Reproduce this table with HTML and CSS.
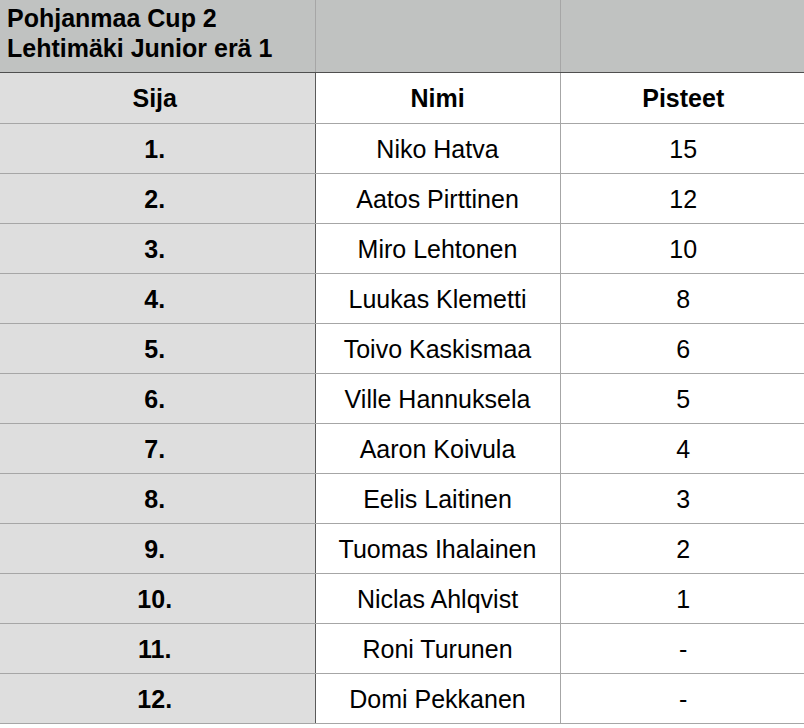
FILE: index.html
```html
<!DOCTYPE html>
<html lang="fi">
<head>
<meta charset="utf-8">
<title>Pohjanmaa Cup 2</title>
<link rel="stylesheet" href="styles.css">
</head>
<body>
<table class="sheet">
  <colgroup><col class="c1"><col class="c2"><col class="c3"></colgroup>
  <tr class="title-row">
    <td class="title">Pohjanmaa Cup 2<br>Lehtimäki Junior erä 1</td>
    <td></td>
    <td></td>
  </tr>
  <tr class="head-row">
    <th class="rank">Sija</th>
    <th>Nimi</th>
    <th>Pisteet</th>
  </tr>
  <tr><td class="rank">1.</td><td>Niko Hatva</td><td>15</td></tr>
  <tr><td class="rank">2.</td><td>Aatos Pirttinen</td><td>12</td></tr>
  <tr><td class="rank">3.</td><td>Miro Lehtonen</td><td>10</td></tr>
  <tr><td class="rank">4.</td><td>Luukas Klemetti</td><td>8</td></tr>
  <tr><td class="rank">5.</td><td>Toivo Kaskismaa</td><td>6</td></tr>
  <tr><td class="rank">6.</td><td>Ville Hannuksela</td><td>5</td></tr>
  <tr><td class="rank">7.</td><td>Aaron Koivula</td><td>4</td></tr>
  <tr><td class="rank">8.</td><td>Eelis Laitinen</td><td>3</td></tr>
  <tr><td class="rank">9.</td><td>Tuomas Ihalainen</td><td>2</td></tr>
  <tr><td class="rank">10.</td><td>Niclas Ahlqvist</td><td>1</td></tr>
  <tr><td class="rank">11.</td><td>Roni Turunen</td><td>-</td></tr>
  <tr><td class="rank">12.</td><td>Domi Pekkanen</td><td>-</td></tr>
</table>
</body>
</html>
```

FILE: styles.css
```css
html, body {
  margin: 0;
  padding: 0;
  background: #ffffff;
}

body {
  font-family: "Liberation Sans", Arial, sans-serif;
  color: #000;
  overflow: hidden;
}

.sheet {
  border-collapse: collapse;
  table-layout: fixed;
  width: 806px;
}

.c1 { width: 315px; }
.c2 { width: 245px; }
.c3 { width: 246px; }

.sheet td,
.sheet th {
  border-left: 1px solid #a6a6a6;
  border-bottom: 1px solid #a6a6a6;
  padding: 1px 0 0 0;
  text-align: center;
  font-size: 25px;
  font-weight: normal;
  height: 48px;
  vertical-align: middle;
}

.sheet tr > :first-child {
  border-left: none;
}

.sheet .title-row td {
  background: #c0c2c1;
  height: 72px;
  padding: 0;
  border-bottom: 1px solid #4f4f4f;
}

.sheet .title-row .title {
  text-align: left;
  vertical-align: top;
  font-weight: bold;
  font-size: 25px;
  line-height: 30px;
  height: 69px;
  padding: 3px 0 0 7px;
  white-space: nowrap;
  border-right: 1px solid #a6a6a6;
}

.sheet .head-row th {
  font-weight: bold;
  height: 49px;
}

.sheet .rank {
  background: #dedede;
  font-weight: bold;
  padding-right: 5px;
  border-right: 1px solid #5a5a5a;
}
```
